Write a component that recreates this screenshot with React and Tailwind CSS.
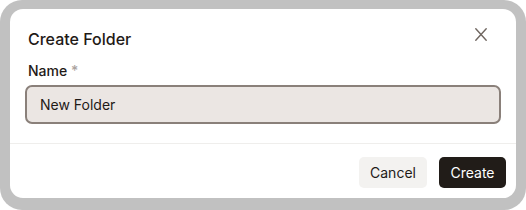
export default function App() {
  return (
    <div className="w-[526px] h-[210px] bg-white">
      <div
        className="w-[526px] h-[210px] bg-[#c1c1c1] rounded-[22px] pt-[9px] pb-[12px] px-[10px]"
        style={{ fontFamily: 'Inter, "Noto Sans", sans-serif' }}
      >
        <div className="w-full h-full bg-white rounded-[13px] flex flex-col">
          <div className="flex items-start justify-between pl-[18px] pr-[29px] pt-[18px]">
            <h2 className="text-[16px] leading-[24px] font-[450] text-[#1f1a17]">
              Create Folder
            </h2>
            <button className="mt-[1px] text-[#6f6660]">
              <svg width="12" height="13" viewBox="0 0 12 13" fill="none">
                <path d="M0.8 0.8 L11.2 12.2 M11.2 0.8 L0.8 12.2" stroke="currentColor" strokeWidth="1.4" strokeLinecap="round" />
              </svg>
            </button>
          </div>
          <div className="px-[15px] pt-[10px]">
            <label className="block pl-[3px] text-[14px] leading-[20px] font-[450] text-[#1f1a17]">
              Name <span className="text-[#aaa39e]">*</span>
            </label>
            <div className="mt-[4px] h-[39px] w-full rounded-[7px] border-2 border-[#8a807a] bg-[#ebe6e3] flex items-center pl-[13px] text-[14px] text-[#1f1a17]">
              New Folder
            </div>
          </div>
          <div className="mt-[19px] h-px bg-[#efeeec]" />
          <div className="flex justify-end gap-[12px] pt-[13px] pr-[10px]">
            <button className="w-[68px] h-[31px] rounded-[5px] bg-[#f3f2f0] text-[14px] text-[#1f1a17]">
              Cancel
            </button>
            <button className="w-[67px] h-[31px] rounded-[5px] bg-[#211c18] text-[14px] text-white">
              Create
            </button>
          </div>
        </div>
      </div>
    </div>
  )
}
